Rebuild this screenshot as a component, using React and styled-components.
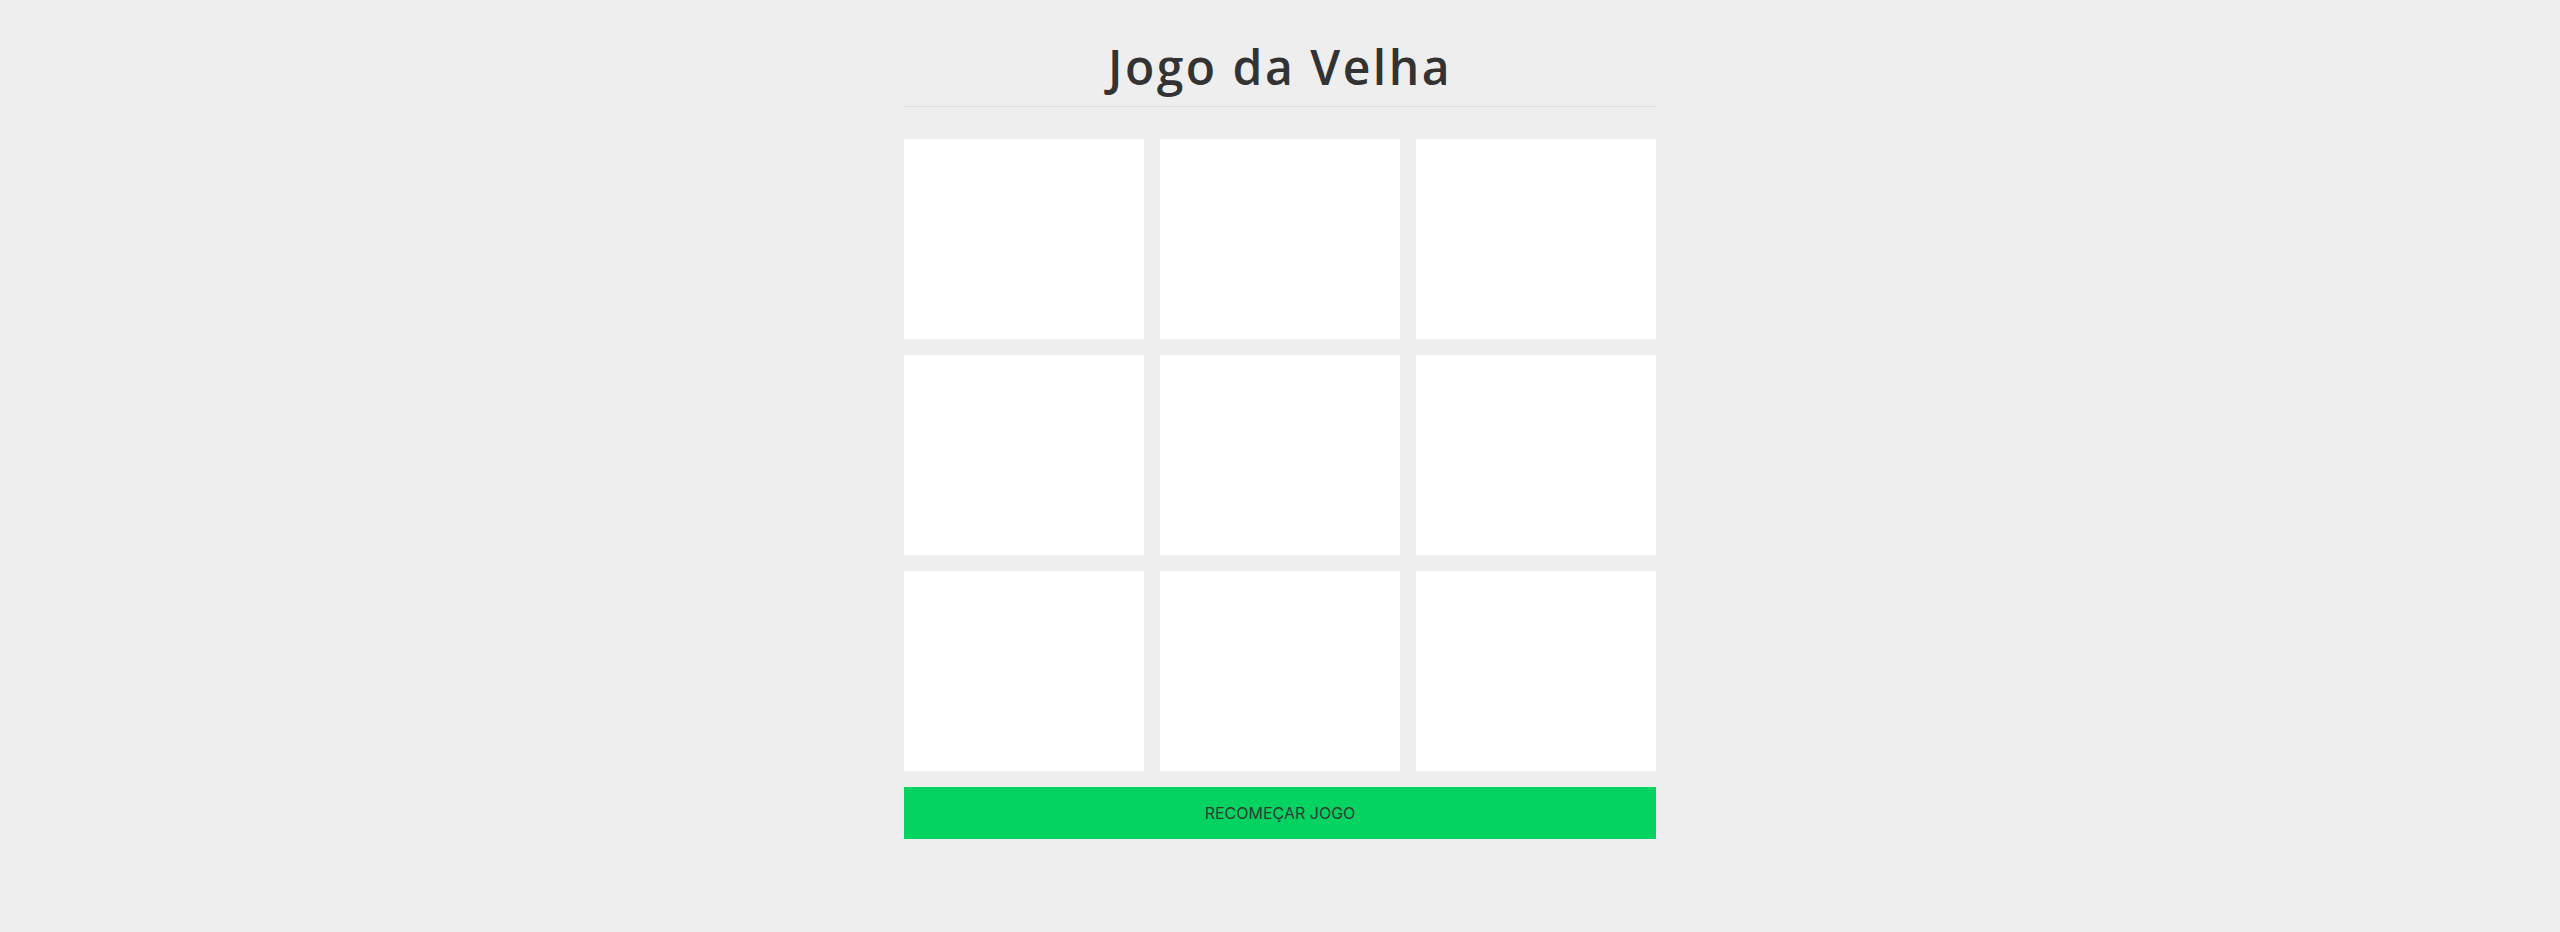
import React, { useState } from "react";
import styled, { createGlobalStyle } from "styled-components";

const GlobalStyle = createGlobalStyle`
  * { box-sizing: border-box; }
  body {
    margin: 0;
    background: #eeeeee;
    font-family: "Inter", "Liberation Sans", sans-serif;
    color: #333;
  }
`;

const Container = styled.div`
  width: 752px;
  margin: 0 auto;
  display: flex;
  flex-direction: column;
`;

const Header = styled.header`
  padding: 38px 0 10px;
  border-bottom: 1px solid #dddddd;
  text-align: center;
`;

const Title = styled.h1`
  margin: 0;
  font-family: "Open Sans", "Noto Sans", sans-serif;
  font-size: 48px;
  line-height: 58px;
  font-weight: 600;
  letter-spacing: 2.5px;
  color: #333333;
`;

const Board = styled.div`
  margin-top: 32px;
  display: grid;
  grid-template-columns: repeat(3, 240px);
  grid-auto-rows: 200px;
  gap: 16px;
`;

const Cell = styled.button`
  border: 0;
  padding: 0;
  background: #ffffff;
  font-family: "Open Sans", sans-serif;
  font-size: 96px;
  font-weight: 700;
  color: #333;
  cursor: pointer;
`;

const ResetButton = styled.button`
  margin-top: 16px;
  height: 52px;
  border: 0;
  background: #04d361;
  color: #2d3a33;
  font-family: "Inter", "Liberation Sans", sans-serif;
  font-size: 16px;
  text-transform: uppercase;
  cursor: pointer;
`;

const App = () => {
  const [cells, setCells] = useState(Array(9).fill(""));
  const [turn, setTurn] = useState("X");

  const play = (i) => {
    if (cells[i]) return;
    const next = [...cells];
    next[i] = turn;
    setCells(next);
    setTurn(turn === "X" ? "O" : "X");
  };

  return (
    <>
      <GlobalStyle />
      <Container>
        <Header>
          <Title>Jogo da Velha</Title>
        </Header>
        <Board>
          {cells.map((c, i) => (
            <Cell key={i} onClick={() => play(i)}>{c}</Cell>
          ))}
        </Board>
        <ResetButton onClick={() => { setCells(Array(9).fill("")); setTurn("X"); }}>
          Recomeçar Jogo
        </ResetButton>
      </Container>
    </>
  );
};

export default App;
